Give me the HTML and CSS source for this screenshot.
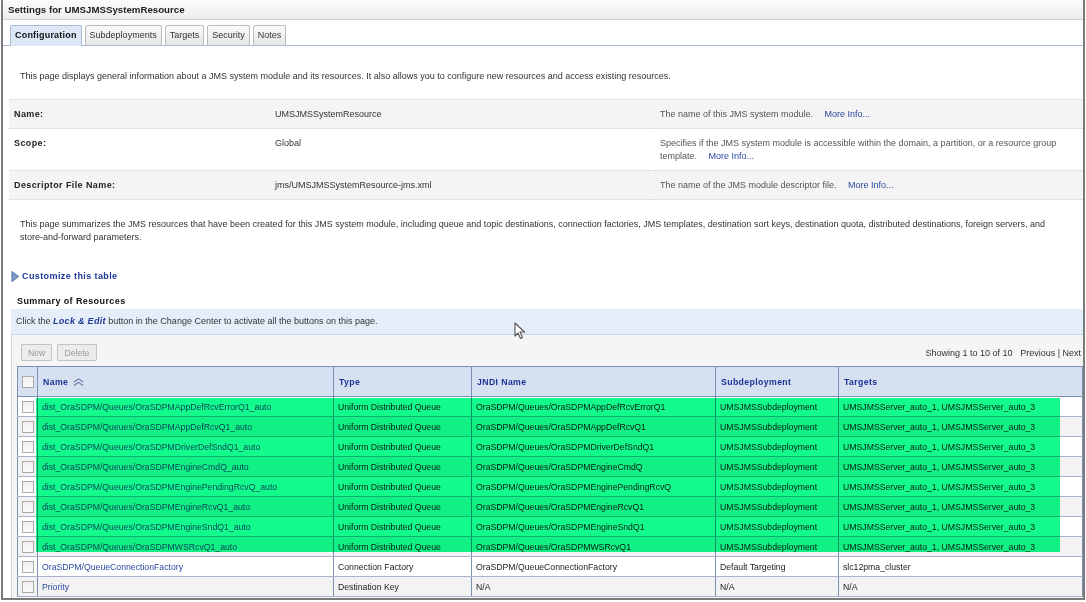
FILE: index.html
```html
<!DOCTYPE html>
<html lang="en">
<head>
  <meta charset="UTF-8" />
  <meta name="viewport" content="width=device-width, initial-scale=1.0" />
  <title>Settings for UMSJMSSystemResource</title>
  <link rel="stylesheet" href="styles.css">
</head>
<body>
  <div class="frame">
    <div class="titlebar">Settings for UMSJMSSystemResource</div>

    <div class="tabs">
      <span class="tab active">Configuration</span>
      <span class="tab">Subdeployments</span>
      <span class="tab">Targets</span>
      <span class="tab">Security</span>
      <span class="tab">Notes</span>
    </div>

    <div class="panel">
      <p class="intro">This page displays general information about a JMS system module and its resources. It also allows you to configure new resources and access existing resources.</p>

      <table class="props">
        <tr class="shade">
          <th>Name:</th>
          <td>UMSJMSSystemResource</td>
          <td class="desc">The name of this JMS system module. <a href="#">More Info...</a></td>
        </tr>
        <tr>
          <th>Scope:</th>
          <td>Global</td>
          <td class="desc"><span>Specifies if the JMS system module is accessible within the domain, a partition, or a resource group</span><br><span>template.</span> <a href="#">More Info...</a></td>
        </tr>
        <tr class="shade">
          <th>Descriptor File Name:</th>
          <td>jms/UMSJMSSystemResource-jms.xml</td>
          <td class="desc">The name of the JMS module descriptor file. <a href="#">More Info...</a></td>
        </tr>
      </table>

      <p class="summary-text">This page summarizes the JMS resources that have been created for this JMS system module, including queue and topic destinations, connection factories, JMS templates, destination sort keys, destination quota, distributed destinations, foreign servers, and store-and-forward parameters.</p>

      <a class="customize" href="#">
        <svg width="8" height="11" viewBox="0 0 8 11"><polygon points="1,0.5 7.5,5.5 1,10.5" fill="#7f9bc7" stroke="#4f6ea3" stroke-width="1"/></svg>
        Customize this table
      </a>

      <h3 class="section-title">Summary of Resources</h3>
      <div class="notice">Click the <em>Lock &amp; Edit</em> button in the Change Center to activate all the buttons on this page.</div>

      <div class="grid-area">
        <div class="controls">
          <div class="buttons">
            <button disabled>New</button>
            <button disabled>Delete</button>
          </div>
          <div class="paging">Showing 1 to 10 of 10&nbsp;&nbsp; Previous | Next</div>
        </div>

        <div class="table-wrap">
          <table class="resources">
            <colgroup>
              <col class="c-check"><col class="c-name"><col class="c-type"><col class="c-jndi"><col class="c-sub"><col>
            </colgroup>
            <thead>
              <tr>
                <th><span class="box"></span></th>
                <th>Name
                  <svg class="sort" width="11" height="8" viewBox="0 0 11 8"><polyline points="1,4 5.5,0.8 10,4" fill="none" stroke="#6a78a8" stroke-width="1.1"/><polyline points="1,7.5 5.5,4.3 10,7.5" fill="none" stroke="#6a78a8" stroke-width="1.1"/></svg>
                </th>
                <th>Type</th>
                <th>JNDI Name</th>
                <th>Subdeployment</th>
                <th>Targets</th>
              </tr>
            </thead>
            <tbody>
              <tr><td><span class="box"></span></td><td><a href="#">dist_OraSDPM/Queues/OraSDPMAppDefRcvErrorQ1_auto</a></td><td>Uniform Distributed Queue</td><td>OraSDPM/Queues/OraSDPMAppDefRcvErrorQ1</td><td>UMSJMSSubdeployment</td><td>UMSJMSServer_auto_1, UMSJMSServer_auto_3</td></tr>
              <tr><td><span class="box"></span></td><td><a href="#">dist_OraSDPM/Queues/OraSDPMAppDefRcvQ1_auto</a></td><td>Uniform Distributed Queue</td><td>OraSDPM/Queues/OraSDPMAppDefRcvQ1</td><td>UMSJMSSubdeployment</td><td>UMSJMSServer_auto_1, UMSJMSServer_auto_3</td></tr>
              <tr><td><span class="box"></span></td><td><a href="#">dist_OraSDPM/Queues/OraSDPMDriverDefSndQ1_auto</a></td><td>Uniform Distributed Queue</td><td>OraSDPM/Queues/OraSDPMDriverDefSndQ1</td><td>UMSJMSSubdeployment</td><td>UMSJMSServer_auto_1, UMSJMSServer_auto_3</td></tr>
              <tr><td><span class="box"></span></td><td><a href="#">dist_OraSDPM/Queues/OraSDPMEngineCmdQ_auto</a></td><td>Uniform Distributed Queue</td><td>OraSDPM/Queues/OraSDPMEngineCmdQ</td><td>UMSJMSSubdeployment</td><td>UMSJMSServer_auto_1, UMSJMSServer_auto_3</td></tr>
              <tr><td><span class="box"></span></td><td><a href="#">dist_OraSDPM/Queues/OraSDPMEnginePendingRcvQ_auto</a></td><td>Uniform Distributed Queue</td><td>OraSDPM/Queues/OraSDPMEnginePendingRcvQ</td><td>UMSJMSSubdeployment</td><td>UMSJMSServer_auto_1, UMSJMSServer_auto_3</td></tr>
              <tr><td><span class="box"></span></td><td><a href="#">dist_OraSDPM/Queues/OraSDPMEngineRcvQ1_auto</a></td><td>Uniform Distributed Queue</td><td>OraSDPM/Queues/OraSDPMEngineRcvQ1</td><td>UMSJMSSubdeployment</td><td>UMSJMSServer_auto_1, UMSJMSServer_auto_3</td></tr>
              <tr><td><span class="box"></span></td><td><a href="#">dist_OraSDPM/Queues/OraSDPMEngineSndQ1_auto</a></td><td>Uniform Distributed Queue</td><td>OraSDPM/Queues/OraSDPMEngineSndQ1</td><td>UMSJMSSubdeployment</td><td>UMSJMSServer_auto_1, UMSJMSServer_auto_3</td></tr>
              <tr><td><span class="box"></span></td><td><a href="#">dist_OraSDPM/Queues/OraSDPMWSRcvQ1_auto</a></td><td>Uniform Distributed Queue</td><td>OraSDPM/Queues/OraSDPMWSRcvQ1</td><td>UMSJMSSubdeployment</td><td>UMSJMSServer_auto_1, UMSJMSServer_auto_3</td></tr>
              <tr><td><span class="box"></span></td><td><a href="#">OraSDPM/QueueConnectionFactory</a></td><td>Connection Factory</td><td>OraSDPM/QueueConnectionFactory</td><td>Default Targeting</td><td>slc12pma_cluster</td></tr>
              <tr><td><span class="box"></span></td><td><a href="#">Priority</a></td><td>Destination Key</td><td>N/A</td><td>N/A</td><td>N/A</td></tr>
            </tbody>
          </table>
          <div class="highlight"></div>
        </div>
      </div>
    </div>

    <svg class="cursor" width="12" height="18" viewBox="0 0 12 18"><path d="M1 1 L1 14 L4 11 L6.5 16.5 L8.5 15.5 L6 10 L10.5 10 Z" fill="#fff" stroke="#555" stroke-width="1.1" stroke-linejoin="round"/></svg>
  </div>
</body>
</html>
```

FILE: styles.css
```css
body {
  margin: 0;
  font-family: "Liberation Sans", Arial, sans-serif;
  font-size: 9px;
  color: #333;
  background: #fff;
}
a {
  color: #2a4aa0;
  text-decoration: none;
}
.frame {
  position: relative;
  margin-left: 1px;
  width: 1084px;
  height: 600px;
  box-sizing: border-box;
  border: 2px solid #7a7a7a;
  border-top: 0;
  overflow: hidden;
}
.titlebar {
  height: 19px;
  line-height: 19px;
  padding-left: 5px;
  font-weight: bold;
  font-size: 9.7px;
  color: #222;
  background: linear-gradient(#fbfbfb, #ededed);
  border-bottom: 1px solid #d0d0d0;
}
.tabs {
  display: flex;
  gap: 3px;
  padding: 5px 0 0 7px;
  border-bottom: 1px solid #a9b9d3;
}
.tab {
  height: 19px;
  line-height: 19px;
  padding: 0 4px;
  border: 1px solid #bcbcbc;
  border-bottom: 0;
  border-radius: 2px 2px 0 0;
  background: linear-gradient(#fafafa, #e6e6e6);
  color: #333;
}
.tab.active {
  font-weight: bold;
  letter-spacing: 0.2px;
  color: #111;
  background: #dde7f5;
  border-color: #a9b9d3;
  margin-bottom: -1px;
  height: 20px;
}
.panel {
  padding-left: 6px;
}
.intro {
  margin: 24px 0 0 11px;
  line-height: 13px;
}
.props {
  width: 100%;
  margin-top: 16px;
  border-collapse: collapse;
  border-top: 1px solid #e2e2e2;
}
.props th,
.props td {
  padding: 8px 5px 7px;
  line-height: 13px;
  text-align: left;
  vertical-align: top;
  border-bottom: 1px dotted #d2d2d2;
}
.props th {
  width: 251px;
  letter-spacing: 0.4px;
  color: #222;
}
.props td {
  width: 375px;
}
.props td.desc {
  width: auto;
  padding-right: 14px;
  white-space: nowrap;
  color: #555;
}
.props td.desc a {
  margin-left: 9px;
}
.props tr.shade {
  background: #f4f4f4;
}
.summary-text {
  margin: 18px 16px 0 11px;
  line-height: 13px;
}
.customize {
  display: flex;
  align-items: center;
  gap: 3px;
  margin: 26px 0 0 2px;
  line-height: 13px;
  font-weight: bold;
  letter-spacing: 0.4px;
  color: #1d3a94;
}
.section-title {
  margin: 12px 0 0 8px;
  font-size: 9px;
  letter-spacing: 0.4px;
  line-height: 13px;
  color: #111;
}
.notice {
  margin: 1px 0 0 2px;
  height: 25px;
  line-height: 25px;
  padding-left: 5px;
  background: #e5edf9;
  border-bottom: 1px solid #c9d3e2;
  color: #333;
}
.notice em {
  font-weight: bold;
  letter-spacing: 0.3px;
  color: #1d3a94;
}
.grid-area {
  margin-left: 2px;
  height: 300px;
  background: #f5f5f5;
  border-left: 1px solid #d4d4d4;
}
.controls {
  display: flex;
  justify-content: space-between;
  align-items: center;
  padding: 9px 2px 5px 9px;
}
.buttons {
  display: flex;
  gap: 5px;
}
.buttons button {
  height: 17px;
  padding: 0 6px;
  font-family: inherit;
  font-size: 8.7px;
  color: #9a9a9a;
  background: #ececec;
  border: 1px solid #c4c4c4;
  border-radius: 1px;
}
.paging {
  color: #333;
}
.table-wrap {
  position: relative;
  margin-left: 5px;
}
.resources {
  width: 100%;
  border-collapse: collapse;
  table-layout: fixed;
  border: 1px solid #7d90b3;
  background: #fff;
  font-size: 8.7px;
}
.c-check { width: 20px; }
.c-name { width: 296px; }
.c-type { width: 138px; }
.c-jndi { width: 244px; }
.c-sub { width: 123px; }
.resources th {
  height: 29px;
  padding: 0 5px;
  text-align: left;
  font-weight: bold;
  letter-spacing: 0.4px;
  color: #1e3296;
  background: #d5e0f1;
  border: 1px solid #7d90b3;
}
.resources td {
  height: 19px;
  padding: 0 4px;
  white-space: nowrap;
  overflow: hidden;
  color: #222;
  border-left: 1px solid #7d90b3;
  border-right: 1px solid #7d90b3;
  border-bottom: 1px solid #a7b3c9;
}
.resources th:first-child,
.resources td:first-child {
  padding: 0 0 0 4px;
}
.resources tbody tr:nth-child(even) {
  background: #f3f3f3;
}
.resources .sort {
  margin-left: 2px;
  vertical-align: -1px;
}
.box {
  display: block;
  width: 10px;
  height: 10px;
  border: 1px solid #a9a9a9;
  background: linear-gradient(#f0f0f0, #fbfbfb);
}
.highlight {
  position: absolute;
  left: 19px;
  top: 32px;
  width: 1024px;
  height: 154px;
  background: #12fb8c;
  mix-blend-mode: multiply;
}
.cursor {
  position: absolute;
  left: 511px;
  top: 322px;
}
```
